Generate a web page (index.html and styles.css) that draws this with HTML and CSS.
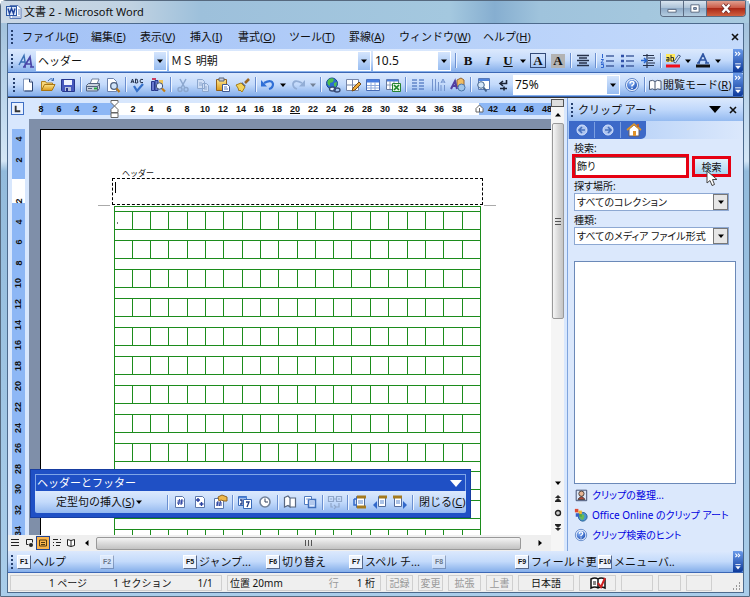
FILE: index.html
```html
<!DOCTYPE html>
<html lang="ja">
<head>
<meta charset="utf-8">
<title>文書 2 - Microsoft Word</title>
<link rel="stylesheet" href="styles.css">
</head>
<body>
<svg class="defs" aria-hidden="true">
  <defs>
    <linearGradient id="gold" x1="0" y1="0" x2="0" y2="1"><stop offset="0" stop-color="#fde58c"/><stop offset="1" stop-color="#d99a1c"/></linearGradient>
    <radialGradient id="orb" cx=".35" cy=".3" r=".8"><stop offset="0" stop-color="#8fb8f8"/><stop offset="1" stop-color="#1d4fb4"/></radialGradient>
  </defs>
  <symbol id="word" viewBox="0 0 16 16"><path d="M4 1.500h8l3 3v10H4z" fill="#fff" stroke="#5a79b5"/><path d="M12 6h2M12 8h2M12 10h2M6 13h8" stroke="#6b8cc8"/><rect x=".5" y="2.500" width="10" height="9" fill="#dbe7fb" stroke="#2d57a5"/><path d="M2 4.500l1.500 5 2-5 2 5 1.500-5" fill="none" stroke="#1f429a" stroke-width="1.500"/></symbol>
  <symbol id="styles" viewBox="0 0 16 16"><path d="M1 12L6 2.500 7.500 12M3 9h4" fill="none" stroke="#3a6fb4" stroke-width="1.500"/><path d="M6 14L12 4l1.500 10M8 11h5M5 14h3M12 14h4" fill="none" stroke="#4a46a8" stroke-width="1.700"/></symbol>
  <symbol id="new" viewBox="0 0 16 16"><path d="M3.500 2h6l3 3v9h-9z" fill="#fff" stroke="#7d93bb"/><path d="M9.500 2v3h3M12.500 5v9h-8" fill="none" stroke="#2b4574"/></symbol>
  <symbol id="open" viewBox="0 0 16 16"><path d="M1.500 13.500v-9h4l1 1.500h6v2" fill="#f6d77c" stroke="#b18322"/><path d="M1.500 13.500l3-6h10.500l-3 6z" fill="url(#gold)" stroke="#a87514"/><path d="M8 4q3-4 5.500-1m0-2v2.500h-2" fill="none" stroke="#3668b5"/></symbol>
  <symbol id="save" viewBox="0 0 16 16"><path d="M1.500 2.500h13v12h-12l-1-1z" fill="#4659bd" stroke="#27378c"/><path d="M4 3h8v5H4z" fill="#eef3ff"/><path d="M5 10h6v4H5z" fill="#b7c2dd"/><path d="M6 11h2v3H6z" fill="#27378c"/></symbol>
  <symbol id="print" viewBox="0 0 16 16"><path d="M5 7l2-5h7l-2 5z" fill="#fff" stroke="#71819c"/><path d="M1.500 8.500l2-2h11v5l-2 2.500h-11z" fill="#c9d1dd" stroke="#53637e"/><path d="M1.500 9.500h11v4M12.500 9.500l2-2.500" fill="none" stroke="#53637e"/><path d="M9 11.500h3" stroke="#1fae3a" stroke-width="1.800"/><path d="M3 11.500h4" stroke="#53637e"/></symbol>
  <symbol id="preview" viewBox="0 0 16 16"><path d="M2.500 1.500h6l3 3v10h-9z" fill="#fff" stroke="#6d83ad"/><circle cx="9" cy="9" r="3.300" fill="#cfe3f8" stroke="#50627f" stroke-width="1.300"/><path d="M11.500 11.500l3 3.500" stroke="#b87a1b" stroke-width="2.200"/></symbol>
  <symbol id="spell" viewBox="0 0 16 16"><path d="M1 6l1.500-4L4 6M1.800 4.800h1.800M5.500 2v4h1.800q1.500-1 0-2 1-2-1.800-2M13 2.500q-3-1-3 1.500t3 1.500" fill="none" stroke="#24324c"/><path d="M4 9l3 5 6-7" fill="none" stroke="#346fc8" stroke-width="2.200"/></symbol>
  <symbol id="research" viewBox="0 0 16 16"><path d="M1.500 4.500h3v9h-3zM5 3.500h3v10H5z" fill="#6878cc" stroke="#293a8d"/><path d="M2 2h4" stroke="#c83d61" stroke-width="2"/><path d="M9 3h4v6H9z" fill="#ecc45b"/><circle cx="9.500" cy="9" r="3.200" fill="#e4f0ff" stroke="#425274"/><path d="M12 11.500l3 3" stroke="#c47e14" stroke-width="2.200"/></symbol>
  <symbol id="cut" viewBox="0 0 16 16"><path d="M5 2l5 9M11 2l-5 9" stroke="#8ca7ce" stroke-width="1.500"/><circle cx="5" cy="12.500" r="2" fill="none" stroke="#8ca7ce" stroke-width="1.500"/><circle cx="11" cy="12.500" r="2" fill="none" stroke="#8ca7ce" stroke-width="1.500"/></symbol>
  <symbol id="copy" viewBox="0 0 16 16"><path d="M2.500 2.500h5l2 2v7h-7zM7.500 6.500h4l2 2v6h-6z" fill="#cfdef5" stroke="#8ca7ce"/><path d="M4 6h3M4 8h3M9 10h3M9 12h3" stroke="#8ca7ce"/></symbol>
  <symbol id="paste" viewBox="0 0 16 16"><path d="M1.500 2.500h10v11h-10z" fill="url(#gold)" stroke="#94621b"/><path d="M4 1h5v3H4z" fill="#c7ccd6" stroke="#5b657a"/><path d="M7.500 7.500h5l2 2v5h-7z" fill="#fff" stroke="#3f5890"/><path d="M9 10h3M9 12h4" stroke="#5c7cc0"/></symbol>
  <symbol id="brush" viewBox="0 0 16 16"><path d="M10 6l4-4" stroke="#9a6622" stroke-width="2.500"/><path d="M7 5l4 4-2 1-3-3z" fill="#5f6d8a"/><path d="M1 8l5-2 4 4-3 5-2-2-1 1-1-3z" fill="#f2d35b" stroke="#a67d1c"/></symbol>
  <symbol id="undo" viewBox="0 0 16 16"><path d="M4 6q8-4 9 1 0 4-4 5" fill="none" stroke="#2f6fd6" stroke-width="2.200"/><path d="M1 3v6.500h6z" fill="#2f6fd6"/></symbol>
  <symbol id="redo" viewBox="0 0 16 16"><path d="M12 6q-8-4-9 1 0 4 4 5" fill="none" stroke="#93aed6" stroke-width="1.800"/><path d="M15 3v6.500H9z" fill="#93aed6"/></symbol>
  <symbol id="link" viewBox="0 0 16 16"><circle cx="7" cy="6.500" r="5.500" fill="#2d6ccf" stroke="#17498e"/><path d="M3 3q3-3 6-1l-1 3-3 1v3q-4-2-2-6M9 6l3-1-1 5-2-1z" fill="#4ebf4b"/><ellipse cx="7.500" cy="12" rx="3" ry="2" fill="#edf3ff" stroke="#394b75" stroke-width="1.300"/><ellipse cx="12" cy="13" rx="3" ry="2" fill="none" stroke="#394b75" stroke-width="1.300"/></symbol>
  <symbol id="tablepen" viewBox="0 0 16 16"><path d="M1.500 2.500h12v11h-12zM1.500 8h12M7.500 2.500v11" fill="#fff" stroke="#7786a8"/><path d="M7 14l1-3 6-6 2 2-6 6z" fill="#edaa39" stroke="#774b18"/></symbol>
  <symbol id="table" viewBox="0 0 16 16"><path d="M1.500 2.500h13v11h-13z" fill="#fff" stroke="#466bb5"/><path d="M2 4h12" stroke="#467be0" stroke-width="3"/><path d="M2 8.500h12M2 11h12M6 5v8M10 5v8" stroke="#8ea9dc"/></symbol>
  <symbol id="excel" viewBox="0 0 16 16"><path d="M1.500 2.500h12v10h-12z" fill="#fff" stroke="#66799d"/><path d="M2 3.500h11" stroke="#4b7ddd" stroke-width="2"/><path d="M2 8h11M5 4v8M9 4v8" stroke="#8b9bb8"/><path d="M7.500 6.500h8v8h-8z" fill="#e4f6e2" stroke="#268231"/><path d="M9 8l5 5M14 8l-5 5" stroke="#1b852b" stroke-width="1.700"/></symbol>
  <symbol id="columns" viewBox="0 0 16 16"><path d="M2 3h5M2 6h5M2 9h5M2 12h5M9 3h5M9 6h5M9 9h5M9 12h5" stroke="#6186c9" stroke-width="1.500"/></symbol>
  <symbol id="textdir" viewBox="0 0 16 16"><path d="M2.500 2v12M5.500 2v12M8.500 5v9M11 6l2-4 2 4M11.500 5h3M11 14V8M14.500 14V8" fill="none" stroke="#7393cd"/></symbol>
  <symbol id="draw" viewBox="0 0 16 16"><path d="M7 3l4-2 3 2v5l-4 3-3-2z" fill="#f1bd61" stroke="#936537"/><circle cx="11.500" cy="10.500" r="3.500" fill="#9fc5ea" stroke="#4974a8"/><path d="M1 12L5 4l2 8M2.500 9H7" fill="none" stroke="#523e9f" stroke-width="2"/></symbol>
  <symbol id="docmap" viewBox="0 0 16 16"><path d="M3.500 1.500h11v11h-11z" fill="#fff" stroke="#587ab7"/><path d="M4 3h10" stroke="#4e82de" stroke-width="2"/><circle cx="6" cy="8" r="3.300" fill="#d5e7fa" stroke="#43638c"/><path d="M8.500 10.500l3 4" stroke="#43638c" stroke-width="2"/></symbol>
  <symbol id="marks" viewBox="0 0 16 16"><path d="M11.500 3v3.500H5M8 4L5 6.500 8 9M5 11.500h7M9 9.500v4" fill="none" stroke="#1c2435" stroke-width="1.600"/></symbol>
  <symbol id="help" viewBox="0 0 16 16"><circle cx="8" cy="8" r="6.500" fill="#eff5ff" stroke="#5c83c6"/><circle cx="8" cy="8" r="5" fill="url(#orb)"/><path d="M6 6.500q0-2 2-2t2 1.800Q10 7.500 8 8.500v1M8 10.800v1.200" fill="none" stroke="#fff" stroke-width="1.400"/></symbol>
  <symbol id="book" viewBox="0 0 16 16"><path d="M2.500 4Q6 2.500 8 4.500 10 2.500 14 4v8.500Q10 11 8 13 6 11 2.500 12.500zM8 4.500V13" fill="#fff" stroke="#47556f"/></symbol>
  <symbol id="center" viewBox="0 0 16 16"><path d="M2 2.500h12M4 5h8M2 7.500h12M4 10h8M2 12.500h12" stroke="#26314a" stroke-width="1.500"/></symbol>
  <symbol id="numlist" viewBox="0 0 16 16"><path d="M6 3h8M6 8h8M6 13h8" stroke="#4662a0" stroke-width="1.500"/><path d="M2.500 1v4M1 6.500h2.500L1 10h3M1 11.500h2.500v3H1" fill="none" stroke="#2f65d0"/></symbol>
  <symbol id="bullist" viewBox="0 0 16 16"><path d="M6 3h8M6 8h8M6 13h8" stroke="#4662a0" stroke-width="1.500"/><path d="M1 3h3M1 8h3M1 13h3" stroke="#2f50a8" stroke-width="2.500"/></symbol>
  <symbol id="indent" viewBox="0 0 16 16"><path d="M3 2.500h11M8 5h7M8 7.500h5M8 10h7M3 12.500h11M7 1v14" stroke="#26314a" stroke-width="1.200"/><path d="M1 7.500h5M4 5l2.500 2.500L4 10" fill="none" stroke="#2767d2" stroke-width="1.500"/></symbol>
  <symbol id="hl" viewBox="0 0 16 16"><path d="M1 1h9v8H1z" fill="#ffe95c"/><path d="M1.500 4.500h2.500V8H1.800V6.200H4M6 2v6h2.500V4.500H6" fill="none" stroke="#333"/><path d="M8.500 9l5-7 2 1-5 7z" fill="#d5e2f7" stroke="#49638d"/><path d="M1 13h14" stroke="#f20d1a" stroke-width="3"/></symbol>
  <symbol id="fontcol" viewBox="0 0 16 16"><path d="M3.500 10L8 1l4 9M5 7h5M2 10h3M10 10h4" fill="none" stroke="#3157a4" stroke-width="1.700"/><path d="M1 13h14" stroke="#111" stroke-width="3"/></symbol>
  <symbol id="home" viewBox="0 0 16 16"><path d="M3 7v7h10V7L8 3z" fill="#fff" stroke="#675d65"/><path d="M1 8l7-6 7 6" fill="none" stroke="#d9942c" stroke-width="1.700"/><path d="M7 9h3v5H7z" fill="#df922b"/><path d="M11 2h2v3h-2z" fill="#b76138"/></symbol>
  <symbol id="back" viewBox="0 0 16 16"><circle cx="8" cy="8" r="5" fill="#adc4ef" stroke="#d6e4ff"/><path d="M11 8H6M8 5L5 8l3 3" fill="none" stroke="#4670bd" stroke-width="1.700"/></symbol>
  <symbol id="fwd" viewBox="0 0 16 16"><circle cx="8" cy="8" r="5" fill="#adc4ef" stroke="#d6e4ff"/><path d="M5 8h5M8 5l3 3-3 3" fill="none" stroke="#4670bd" stroke-width="1.700"/></symbol>
  <symbol id="pgnum" viewBox="0 0 16 16"><path d="M3.500 2.500h7l2 2v9h-9z" fill="#fff" stroke="#5b77aa"/><path d="M7.500 5L6.500 11M10 5L9 11M5.500 7h6M5 9h6" stroke="#2940a0"/></symbol>
  <symbol id="pgs" viewBox="0 0 16 16"><path d="M3.500 2.500h7l2 2v9h-9z" fill="#fff" stroke="#5b77aa"/><path d="M6 4v4M4 6h4M9.500 8v4M7.500 10h4" stroke="#2940a0" stroke-width="1.400"/></symbol>
  <symbol id="pgfmt" viewBox="0 0 16 16"><path d="M2.500 4.500h9v10h-9z" fill="#fff" stroke="#5b77aa"/><path d="M6 7L5 12M8.500 7l-1 5M4 9h6M4 11h6" stroke="#2940a0"/><path d="M6 3l4-2 5 2v4h-3L9 6 7 7z" fill="#edb84c" stroke="#916521"/></symbol>
  <symbol id="date" viewBox="0 0 16 16"><path d="M1.500 2.500h8v9h-8z" fill="#f4f7ff" stroke="#3869b8"/><path d="M2 3.500h8" stroke="#4c82d6" stroke-width="2"/><path d="M6.500 5.500h8v9h-8z" fill="#fff" stroke="#3869b8"/><path d="M3 6h2v4H3M9 8h3l-2 5" fill="none" stroke="#213b84" stroke-width="1.300"/></symbol>
  <symbol id="clock" viewBox="0 0 16 16"><circle cx="8" cy="8" r="5" fill="#fff" stroke="#72829b" stroke-width="1.600"/><path d="M8 4.500V8h3" fill="none" stroke="#32415c"/></symbol>
  <symbol id="setup" viewBox="0 0 16 16"><path d="M2.500 3.500L6 2l2 2v9l-2-1.500-3.500 1.500zM8 4h5.500v9H8" fill="#fff" stroke="#596880" stroke-width="1.200"/></symbol>
  <symbol id="showdoc" viewBox="0 0 16 16"><path d="M2.500 2.500h7v8h-7z" fill="#fff" stroke="#527dc0"/><path d="M6.500 5.500h7v8h-7z" fill="#dbe9ff" stroke="#416fba" stroke-width="1.500"/><path d="M4 5h4M8 8h4M8 10h4" stroke="#8aa8da"/></symbol>
  <symbol id="same" viewBox="0 0 16 16"><path d="M1.500 2.500h5v5h-5zM9.500 2.500h5v5h-5zM7 5h2M4 9v4h2M12 9v4H9M7 11l2 2-2 2M3 5h2M11 5h2" fill="none" stroke="#8fa6c9" stroke-width="1.200"/></symbol>
  <symbol id="switch" viewBox="0 0 16 16"><path d="M4.500 2.500h8v11h-8z" fill="#fff" stroke="#526c9d"/><path d="M5 3h9M5 13h9" stroke="#a57b20" stroke-width="3"/><path d="M6 7h5M6 9h5" stroke="#5987cf"/><path d="M2 5h3M2 5v6h3" fill="none" stroke="#3268ca" stroke-width="1.500"/></symbol>
  <symbol id="prev" viewBox="0 0 16 16"><path d="M6.500 2.500h7v10h-7z" fill="#fff" stroke="#526c9d"/><path d="M7 3h8" stroke="#a57b20" stroke-width="3"/><path d="M8 7h4M8 9h4" stroke="#5987cf"/><path d="M1 11l4-4v8z" fill="#3268ca"/></symbol>
  <symbol id="next" viewBox="0 0 16 16"><path d="M2.500 2.500h7v10h-7z" fill="#fff" stroke="#526c9d"/><path d="M1 3h9" stroke="#a57b20" stroke-width="3"/><path d="M4 7h4M4 9h4" stroke="#5987cf"/><path d="M15 11l-4-4v8z" fill="#3268ca"/></symbol>
  <symbol id="organize" viewBox="0 0 16 16"><path d="M2.500 2.500h12v12h-12z" fill="#dce7f8" stroke="#2f3e62"/><circle cx="8.500" cy="6.500" r="3" fill="#e7b694" stroke="#3b3430"/><path d="M4.500 13q4-6 8 0z" fill="#c14e3c" stroke="#3b3430"/></symbol>
  <symbol id="online" viewBox="0 0 16 16"><circle cx="10" cy="10" r="5" fill="#4595d2" stroke="#275d8f"/><path d="M7 8l4-1 1 3-2 4-3-2z" fill="#67bb57"/><path d="M1 1h4v4H1z" fill="#e04a32"/><path d="M5 3h4v4H5z" fill="#f0b62d"/><path d="M2 6h4v4H2z" fill="#355fc6"/><path d="M6 7h3v3H6z" fill="#52a942"/></symbol>
  <symbol id="tri" viewBox="0 0 8 8"><path d="M1 2.500h6L4 6z"/></symbol>
  <symbol id="triup" viewBox="0 0 8 8"><path d="M1 5.500h6L4 2z"/></symbol>
  <symbol id="trileft" viewBox="0 0 8 8"><path d="M5.500 1v6L2 4z"/></symbol>
  <symbol id="triright" viewBox="0 0 8 8"><path d="M2.500 1v6L6 4z"/></symbol>
  <symbol id="close" viewBox="0 0 8 8"><path d="M1 1l6 6M7 1L1 7" stroke="currentColor" stroke-width="1.600"/></symbol>
  <symbol id="more" viewBox="0 0 10 24"><path d="M2 3l2 2-2 2M5 3l2 2-2 2" fill="none" stroke="#fff" stroke-width="1.200"/><path d="M2 15.500h6" stroke="#fff"/><path d="M2 17.500h6L5 21z" fill="#fff"/></symbol>
</svg>

<div class="window">
  <header class="titlebar">
    <svg class="ic"><use href="#word"/></svg>
    <h1>文書 2 - Microsoft Word</h1>
    <div class="winbtns">
      <button aria-label="最小化"><svg viewBox="0 0 24 15"><path d="M7.500 8.500h9v3h-9z" fill="#fff" stroke="#53647c"/></svg></button>
      <button aria-label="元に戻す"><svg viewBox="0 0 24 15"><path d="M7.500 3.500h9v8h-9z" fill="#fff" stroke="#53647c"/><path d="M10.500 6.500h3v2h-3z" fill="#9fb5cf" stroke="#53647c"/></svg></button>
      <button class="x" aria-label="閉じる"><svg viewBox="0 0 38 15"><path d="M15.500 3.500l7 8M22.500 3.500l-7 8" stroke="#6b2a2a" stroke-width="4"/><path d="M15.500 3.500l7 8M22.500 3.500l-7 8" stroke="#fff" stroke-width="2.400"/></svg></button>
    </div>
  </header>

  <div class="frame">
    <nav class="menubar">
      <span class="grip"></span>
      <div class="menus">
        <button>ファイル(<u>F</u>)</button><button>編集(<u>E</u>)</button><button>表示(<u>V</u>)</button><button>挿入(<u>I</u>)</button><button>書式(<u>O</u>)</button><button>ツール(<u>T</u>)</button><button>罫線(<u>A</u>)</button><button>ウィンドウ(<u>W</u>)</button><button>ヘルプ(<u>H</u>)</button>
      </div>
      <button class="docclose" aria-label="文書を閉じる"><svg class="tiny"><use href="#close"/></svg></button>
    </nav>

    <div class="toolbar">
      <span class="grip"></span>
      <button class="tb" aria-label="スタイル"><svg class="ic"><use href="#styles"/></svg></button>
      <div class="combo c-style"><select aria-label="スタイル名"><option>ヘッダー</option></select><span><svg class="tiny"><use href="#tri"/></svg></span></div>
      <div class="combo c-font"><select aria-label="フォント"><option>ＭＳ 明朝</option></select><span><svg class="tiny"><use href="#tri"/></svg></span></div>
      <div class="combo c-size"><select aria-label="サイズ"><option>10.5</option></select><span><svg class="tiny"><use href="#tri"/></svg></span></div>
      <i class="sep"></i>
      <button class="tb letter"><b>B</b></button><button class="tb letter"><em>I</em></button><button class="tb letter"><u>U</u></button><button class="dd" aria-label="下線の種類"><svg class="tiny"><use href="#tri"/></svg></button>
      <button class="tb letter"><span class="boxed">A</span></button><button class="tb letter"><span class="shaded">A</span></button>
      <i class="sep"></i>
      <button class="tb" aria-label="中央揃え"><svg class="ic"><use href="#center"/></svg></button>
      <i class="sep"></i>
      <button class="tb" aria-label="段落番号"><svg class="ic"><use href="#numlist"/></svg></button><button class="tb" aria-label="箇条書き"><svg class="ic"><use href="#bullist"/></svg></button><button class="tb" aria-label="インデント"><svg class="ic"><use href="#indent"/></svg></button>
      <i class="sep"></i>
      <button class="tb" aria-label="蛍光ペン"><svg class="ic"><use href="#hl"/></svg></button><button class="dd" aria-label="蛍光ペンの色"><svg class="tiny"><use href="#tri"/></svg></button>
      <button class="tb" aria-label="フォントの色"><svg class="ic"><use href="#fontcol"/></svg></button><button class="dd" aria-label="色の選択"><svg class="tiny"><use href="#tri"/></svg></button>
      <button class="more" aria-label="その他のボタン"><svg><use href="#more"/></svg></button>
    </div>

    <div class="toolbar std">
      <span class="grip"></span>
      <button class="tb" aria-label="新規作成"><svg class="ic"><use href="#new"/></svg></button><button class="tb" aria-label="開く"><svg class="ic"><use href="#open"/></svg></button><button class="tb" aria-label="上書き保存"><svg class="ic"><use href="#save"/></svg></button>
      <i class="sep"></i>
      <button class="tb" aria-label="印刷"><svg class="ic"><use href="#print"/></svg></button><button class="tb" aria-label="印刷プレビュー"><svg class="ic"><use href="#preview"/></svg></button>
      <i class="sep"></i>
      <button class="tb" aria-label="スペルチェック"><svg class="ic"><use href="#spell"/></svg></button><button class="tb" aria-label="リサーチ"><svg class="ic"><use href="#research"/></svg></button>
      <i class="sep"></i>
      <button class="tb" aria-label="切り取り"><svg class="ic"><use href="#cut"/></svg></button><button class="tb" aria-label="コピー"><svg class="ic"><use href="#copy"/></svg></button><button class="tb" aria-label="貼り付け"><svg class="ic"><use href="#paste"/></svg></button><button class="tb" aria-label="書式のコピー"><svg class="ic"><use href="#brush"/></svg></button>
      <i class="sep"></i>
      <button class="tb" aria-label="元に戻す"><svg class="ic"><use href="#undo"/></svg></button><button class="dd" aria-label="履歴"><svg class="tiny"><use href="#tri"/></svg></button><button class="tb" aria-label="やり直し"><svg class="ic"><use href="#redo"/></svg></button><button class="dd off" aria-label="やり直しの履歴"><svg class="tiny"><use href="#tri"/></svg></button>
      <i class="sep"></i>
      <button class="tb" aria-label="ハイパーリンク"><svg class="ic"><use href="#link"/></svg></button><button class="tb" aria-label="罫線"><svg class="ic"><use href="#tablepen"/></svg></button><button class="tb" aria-label="表の挿入"><svg class="ic"><use href="#table"/></svg></button><button class="tb" aria-label="ワークシート"><svg class="ic"><use href="#excel"/></svg></button>
      <i class="sep"></i>
      <button class="tb" aria-label="段組み"><svg class="ic"><use href="#columns"/></svg></button><button class="tb" aria-label="縦書き"><svg class="ic"><use href="#textdir"/></svg></button><button class="tb" aria-label="図形描画"><svg class="ic"><use href="#draw"/></svg></button>
      <i class="sep"></i>
      <button class="tb" aria-label="見出しマップ"><svg class="ic"><use href="#docmap"/></svg></button><button class="tb" aria-label="編集記号"><svg class="ic"><use href="#marks"/></svg></button>
      <div class="combo c-zoom"><select aria-label="ズーム"><option>75%</option></select><span><svg class="tiny"><use href="#tri"/></svg></span></div>
      <button class="tb" aria-label="ヘルプ"><svg class="ic"><use href="#help"/></svg></button>
      <i class="sep"></i>
      <button class="read"><svg class="ic"><use href="#book"/></svg>閲覧モード(<u>R</u>)</button>
      <button class="more" aria-label="その他のボタン"><svg><use href="#more"/></svg></button>
    </div>

    <div class="work">
      <main class="doc">
        <div class="hruler">
          <span class="tabsel"><svg viewBox="0 0 12 12"><path d="M4 3v6h5" fill="none" stroke="#333" stroke-width="2"/></svg></span>
          <div class="hscale">
            <span>8</span><span>6</span><span>4</span><span>2</span>
            <span class="mark"><svg viewBox="0 0 9 18"><path d="M1 .5h7v2L4.500 6 1 2.500zM1 12.500V9.500L4.500 6 8 9.500v3zM1 13h7v4.500H1z" fill="#fff" stroke="#666"/></svg></span>
            <span>2</span><span>4</span><span>6</span><span>8</span><span>10</span><span>12</span><span>14</span><span>16</span><span>18</span><span><u>20</u></span><span>22</span><span>24</span><span>26</span><span>28</span><span>30</span><span>32</span><span>34</span><span>36</span><span>38</span>
            <span class="mark end"><svg viewBox="0 0 9 9"><path d="M1 8V4.500L4.500 1 8 4.500V8zM4.500 4v4" fill="#fff" stroke="#666"/></svg></span>
            <span>42</span><span>44</span><span>46</span><span>48</span>
          </div>
        </div>
        <div class="vruler"><span>4</span><span>2</span><span></span><span>2</span><span>4</span><span>6</span><span>8</span><span>10</span><span>12</span><span>14</span><span>16</span><span>18</span><span>20</span><span>22</span><span>24</span><span>26</span><span>28</span><span>30</span><span>32</span><span>34</span></div>
        <div class="canvas">
          <article class="page">
            <p class="hlabel">ヘッダー</p>
            <div class="hbox"><i class="caret"></i></div>
            <svg class="genko" width="398" height="350" viewBox="0 0 398 350">
              <defs>
                <path id="row" d="M16 6.500H382M16 24.500H382M34.500 7V24M52.500 7V24M70.500 7V24M89.500 7V24M107.500 7V24M125.500 7V24M144.500 7V24M162.500 7V24M180.500 7V24M199.500 7V24M217.500 7V24M235.500 7V24M253.500 7V24M272.500 7V24M290.500 7V24M309.500 7V24M327.500 7V24M345.500 7V24M364.500 7V24"/>
              </defs>
              <path d="M0 .5H12M386 .5H398" stroke="#aaa"/>
              <g fill="none" stroke="#1c8c1c">
                <path d="M16.500 1V350M382.500 1V350M16 1.500H382"/>
                <use href="#row"/><use href="#row" y="29"/><use href="#row" y="58"/><use href="#row" y="87"/><use href="#row" y="116"/><use href="#row" y="145"/><use href="#row" y="174"/><use href="#row" y="203"/><use href="#row" y="232"/><use href="#row" y="260"/><use href="#row" y="289"/><use href="#row" y="318"/>
              </g>
              <path d="M19.500 17v2" stroke="#777"/>
            </svg>
          </article>
        </div>
        <div class="vscroll">
          <i class="split"></i>
          <svg class="tiny"><use href="#triup"/></svg>
          <div class="vthumb"><i></i></div>
          <div class="vend">
            <svg class="tiny"><use href="#tri"/></svg>
            <svg class="tiny" viewBox="0 0 8 8"><path d="M1.500 4L4 1.500 6.500 4M1.500 7L4 4.500 6.500 7M1 7.500h6" stroke="#222" fill="#222"/></svg>
            <svg class="tiny" viewBox="0 0 8 8"><circle cx="4" cy="4" r="2.500" fill="#ccc" stroke="#222" stroke-width="1.400"/></svg>
            <svg class="tiny" viewBox="0 0 8 8"><path d="M1.500 1L4 3.500 6.500 1M1.500 4L4 6.500 6.500 4M1 .5h6" stroke="#222" fill="#222"/></svg>
          </div>
        </div>
        <div class="hscroll">
          <button aria-label="下書き"><svg viewBox="0 0 10 10"><path d="M1 1.500h8M1 4.500h8M1 7.500h8" stroke="#222"/></svg></button>
          <button aria-label="Web レイアウト"><svg viewBox="0 0 10 10"><path d="M2.500 1.500h6v3M2.500 1.500v5h2" fill="none" stroke="#222"/><circle cx="7" cy="7" r="2" fill="#222"/></svg></button>
          <button class="on" aria-label="印刷レイアウト"><svg viewBox="0 0 10 10"><path d="M1.500 2h7v6h-7zM3 4.500h4M3 6.500h4" fill="none" stroke="#553a10"/></svg></button>
          <button aria-label="アウトライン"><svg viewBox="0 0 10 10"><path d="M1 1.500h5M4 4.500h5M4 7.500h4M1 4.500h1M1 7.500h1M8 1.500h1" stroke="#222"/></svg></button>
          <button aria-label="閲覧レイアウト"><svg viewBox="0 0 10 10"><path d="M1.500 1.500L5 2.500l3.500-1v6L5 8.500l-3.500-1zM5 2.500v6" fill="#fff" stroke="#222"/></svg></button>
          <span class="arr"><svg class="tiny"><use href="#trileft"/></svg></span>
          <div class="hthumb"><i></i></div>
          <span class="arr r"><svg class="tiny"><use href="#triright"/></svg></span>
        </div>

        <section class="float">
          <header><h2>ヘッダーとフッター</h2><svg viewBox="0 0 12 7"><path d="M0 0h12L6 7z" fill="#fff"/></svg></header>
          <div class="fbar">
            <button class="auto">定型句の挿入(<u>S</u>)<svg class="tiny"><use href="#tri"/></svg></button>
            <i class="sep"></i>
            <button class="tb" aria-label="ページ番号"><svg class="ic"><use href="#pgnum"/></svg></button><button class="tb" aria-label="ページ数"><svg class="ic"><use href="#pgs"/></svg></button><button class="tb" aria-label="番号の書式"><svg class="ic"><use href="#pgfmt"/></svg></button>
            <i class="sep"></i>
            <button class="tb" aria-label="日付"><svg class="ic"><use href="#date"/></svg></button><button class="tb" aria-label="時刻"><svg class="ic"><use href="#clock"/></svg></button>
            <i class="sep"></i>
            <button class="tb" aria-label="ページ設定"><svg class="ic"><use href="#setup"/></svg></button><button class="tb" aria-label="本文の表示"><svg class="ic"><use href="#showdoc"/></svg></button>
            <i class="sep"></i>
            <button class="tb" aria-label="前と同じ"><svg class="ic"><use href="#same"/></svg></button>
            <i class="sep"></i>
            <button class="tb" aria-label="切り替え"><svg class="ic"><use href="#switch"/></svg></button><button class="tb" aria-label="前を表示"><svg class="ic"><use href="#prev"/></svg></button><button class="tb" aria-label="次を表示"><svg class="ic"><use href="#next"/></svg></button>
            <i class="sep"></i>
            <button class="fclose">閉じる(<u>C</u>)</button>
          </div>
        </section>
      </main>

      <aside class="pane">
        <header class="ptitle"><span class="grip"></span><h2>クリップ アート</h2><svg viewBox="0 0 12 7"><path d="M0 0h12L6 7z"/></svg><svg class="tiny"><use href="#close"/></svg></header>
        <div class="pnav"><div><button aria-label="戻る"><svg class="ic"><use href="#back"/></svg></button><button aria-label="進む"><svg class="ic"><use href="#fwd"/></svg></button><button aria-label="ホーム"><svg class="ic"><use href="#home"/></svg></button></div></div>
        <form class="pform">
          <label for="q">検索:</label>
          <div class="search">
            <input id="q" type="text" value="飾り">
            <button type="button">検索<svg class="cursor" viewBox="0 0 12 17"><path d="M1 1v12l3-2.500 2 5 2.500-1-2-5H11z" fill="#fff" stroke="#444"/></svg></button>
          </div>
          <label for="place">探す場所:</label>
          <div class="pick"><select id="place"><option>すべてのコレクション</option></select><span><svg class="tiny"><use href="#tri"/></svg></span></div>
          <label for="kind">種類:</label>
          <div class="pick"><select id="kind"><option>すべてのメディア ファイル形式</option></select><span><svg class="tiny"><use href="#tri"/></svg></span></div>
        </form>
        <div class="results"></div>
        <nav class="links">
          <a href="#"><svg class="ic"><use href="#organize"/></svg>クリップの整理...</a>
          <a href="#"><svg class="ic"><use href="#online"/></svg>Office Online のクリップ アート</a>
          <a href="#"><svg class="ic"><use href="#help"/></svg>クリップ検索のヒント</a>
        </nav>
      </aside>
    </div>

    <div class="fkeys">
      <span class="grip"></span>
      <div class="keys">
        <button><kbd>F1</kbd>ヘルプ</button><button class="off"><kbd>F2</kbd></button><button><kbd>F5</kbd>ジャンプ...</button><button><kbd>F6</kbd>切り替え</button><button><kbd>F7</kbd>スペル チ...</button><button class="off"><kbd>F8</kbd></button><button><kbd>F9</kbd>フィールド更</button><button><kbd>F10</kbd>メニューバ..</button>
      </div>
      <button class="more" aria-label="その他のボタン"><svg><use href="#more"/></svg></button>
    </div>

    <footer class="status">
      <div class="p1"><span>1 ページ</span><span>1 セクション</span><span>1/1</span></div>
      <div class="p2"><span>位置 20mm</span><span class="dim">行</span><span>1 桁</span></div>
      <div class="dim">記録</div><div class="dim">変更</div><div class="dim">拡張</div><div class="dim">上書</div>
      <div>日本語</div>
      <div><svg class="ic" viewBox="0 0 16 16"><path d="M1 4q4-2 7 0 3-2 7 0v9q-4-2-7 0-3-2-7 0zM8 4v9" fill="#fff" stroke="#111" stroke-width="1.500"/><path d="M3 7h3M3 9h3" stroke="#111"/><path d="M8 8l3 4 4-9" fill="none" stroke="#d02020" stroke-width="2"/></svg></div>
      <div></div><div></div><div></div>
      <svg class="resize" viewBox="0 0 10 10"><path d="M8 2h1M8 5h1M8 8h1M5 5h1M5 8h1M2 8h1" stroke="#999" stroke-width="2"/></svg>
    </footer>
  </div>
</div>
</body>
</html>
```
FILE: styles.css
```css
* { box-sizing: border-box; }

body {
  margin: 0;
  font: 11px/16px "Noto Sans", "Noto Sans CJK JP", sans-serif;
  color: #111;
}

.defs { position: absolute; width: 0; height: 0; }
h1, h2, p { margin: 0; font-size: inherit; font-weight: normal; }

button, select, input {
  margin: 0;
  padding: 0;
  border: 0;
  border-radius: 0;
  background: none;
  font: inherit;
  color: inherit;
  appearance: none;
  white-space: nowrap;
}

svg { display: block; flex: none; }
.ic { width: 16px; height: 16px; }
.tiny { width: 8px; height: 8px; }

.window {
  display: flex;
  flex-direction: column;
  height: 100vh;
  padding: 0 5px 3px 6px;
  background: linear-gradient(#bdd0e2 0, #a3c2dd 22px, #c5dcf0 120px, #d4e6f6 160px, #93bbdc 170px, #a9cdea 100%);
  border: 1px solid #56697f;
  border-radius: 6px 6px 0 0;
}

.titlebar {
  display: flex;
  align-items: center;
  gap: 2px;
  height: 22px;
  margin: 0 -5px 0 -6px;
  padding-left: 5px;
  background: linear-gradient(90deg, #cbd8e6, #c0d2e2 130px, #9dc0db 200px, #a4c8df 60%, #86aed0 66%, #9fc3dc 72%, #a9cbe0);
}
.titlebar h1 { flex: 1; }
.winbtns {
  display: flex;
  align-self: flex-start;
  margin-right: 3px;
  border: 1px solid #5b6c83;
  border-top: 0;
  border-radius: 0 0 4px 4px;
  overflow: hidden;
}
.winbtns button { width: 23px; height: 15px; border-right: 1px solid #5b6c83; background: linear-gradient(#d8e4ef, #a8bfd5 50%, #8fabc7 50%, #b4cce0); }
.winbtns svg { width: 22px; height: 15px; }
.winbtns .x { width: 38px; border: 0; background: linear-gradient(#e0a090, #c9533f 50%, #ab2a18 50%, #d0603f); }
.winbtns .x svg { width: 38px; }

.frame {
  display: flex;
  flex: 1;
  flex-direction: column;
  min-height: 0;
  border: 1px solid #4d6a8c;
  background: #c4dafa;
}

.grip {
  flex: none;
  width: 2px;
  height: 14px;
  margin: 0 3px;
  background: repeating-linear-gradient(#26406f 0 2px, transparent 2px 4px);
}

.menubar { display: flex; flex: none; align-items: center; height: 25px; background: linear-gradient(90deg, #a3c2f6, #c4dafb); }
.menus { display: grid; flex: 1; grid-template-columns: 69px 49px 50px 48px 51px 60px 50px 84px auto; margin-left: 6px; justify-content: start; }
.menus button { text-align: left; }
.docclose { padding: 0 4px; }

.toolbar {
  display: flex;
  flex: none;
  align-items: center;
  height: 24px;
  background: linear-gradient(#dce9fd, #c3dafb 50%, #84aeea);
  border-bottom: 1px solid #3b67b5;
}
.std { padding-left: 2px; }
.tb { display: flex; flex: none; align-items: center; justify-content: center; width: 20px; height: 20px; }
.dd { display: flex; flex: none; width: 10px; justify-content: center; }
.off svg { opacity: .4; }
.sep { flex: none; width: 1px; height: 15px; margin: 0 2px; background: #6a8fd0; box-shadow: 1px 0 #edf4ff; }
.combo { display: flex; flex: none; height: 20px; margin-right: 2px; background: #fff; }
.combo select { flex: 1; min-width: 0; padding-left: 2px; }
.combo span { display: flex; align-items: center; justify-content: center; width: 12px; margin: 1px; background: linear-gradient(#d5e5fd, #98bdf1); }
.c-style { width: 131px; }
.c-font { width: 202px; }
.c-size { width: 78px; }
.c-zoom { width: 107px; }
.c-size select, .c-zoom select { font-size: 12px; }
.letter { font: bold 13px/16px "Liberation Serif", serif; }
.boxed { padding: 0 2px; border: 1px solid #334a78; line-height: 13px; }
.shaded { padding: 0 2px; background: #b3b3b3; line-height: 14px; }
.more { flex: none; width: 10px; height: 100%; margin-left: auto; background: linear-gradient(#6b9bea, #0e3a9b); border-radius: 0 2px 2px 0; }
.more svg { width: 10px; height: 100%; }
.read { display: flex; align-items: center; }

.work { display: grid; flex: 1; grid-template-columns: minmax(0, 1fr) 176px; min-height: 0; border-top: 1px solid #333; }

.doc {
  position: relative;
  display: grid;
  grid-template: 21px minmax(0, 1fr) 16px / 21px minmax(0, 1fr) 16px;
  min-height: 0;
  background: #d8e7fd;
  font-size: 9px;
}
.hruler { display: flex; grid-column: 1 / 3; align-items: center; overflow: hidden; }
.tabsel { flex: none; width: 13px; height: 13px; margin: 0 8px 0 3px; background: #eaf2ff; border: 1px solid #3e6fc4; }
.hscale {
  display: flex;
  align-items: center;
  height: 12px;
  font: bold 9px/12px "Liberation Sans", sans-serif;
  background: linear-gradient(90deg, transparent 9px, #8db7f5 9px 82px, #fff 82px 447px, #8db7f5 447px);
}
.hscale span { flex: none; width: 18px; text-align: center; }
.hscale .mark { display: flex; width: 20px; justify-content: center; }
.hscale .mark svg { width: 9px; height: 18px; }
.hscale .end { width: 18px; justify-content: flex-end; }
.hscale .end svg { height: 9px; }

.vruler {
  display: grid;
  grid-row: 2 / 4;
  grid-column: 1;
  grid-template-rows: repeat(20, 1fr);
  justify-items: center;
  margin: 10px 4px 0;
  padding-bottom: 10px;
  font: bold 9px/12px "Liberation Sans", sans-serif;
  background: linear-gradient(#8db7f5 50px, #fff 50px 74px, #8db7f5 74px);
  align-items: center;
  overflow: hidden;
}
.vruler span { transform: rotate(-90deg); }

.canvas { grid-row: 2; grid-column: 2; padding: 10px 0 0 11px; overflow: hidden; background: #7f8fa9; }
.page { padding: 38px 0 0 57px; background: #fff; border: 1px solid #000; border-width: 1px 0 0 1px; }
.hlabel { height: 10px; padding-left: 24px; font-size: 8px; line-height: 10px; }
.hbox { width: 371px; height: 27px; margin: 0 0 0 14px; padding: 3px 2px; border: 1px dashed #000; }
.caret { display: block; width: 1px; height: 11px; background: #000; }

.vscroll {
  display: flex;
  grid-row: 1 / 4;
  grid-column: 3;
  flex-direction: column;
  align-items: center;
  gap: 4px;
  background: linear-gradient(90deg, #f5f5f5 13px, #d8e7fd 13px);
  padding: 1px 3px 0 0;
}
.split { width: 13px; height: 8px; background: #ddd; border: 1px solid #555; }
.vthumb { display: flex; align-items: center; justify-content: center; width: 12px; height: 196px; border: 1px solid #999; border-radius: 2px; background: linear-gradient(90deg, #f6f6f6, #dadada 50%, #c4c4c4); }
.vthumb i { width: 6px; height: 7px; background: repeating-linear-gradient(#555 0 1px, transparent 1px 3px); }
.vend { display: flex; flex-direction: column; gap: 7px; margin-top: auto; padding-bottom: 19px; }
.hscroll { z-index: 1; display: flex; grid-row: 3; grid-column: 1 / 3; align-items: center; background: #efefef; }
.hscroll button { display: flex; flex: none; align-items: center; justify-content: center; width: 14px; height: 14px; }
.hscroll button svg { width: 10px; height: 10px; }
.hscroll .on { border: 1px solid #23438e; background: #fbb44b; }
.arr { display: flex; flex: none; width: 18px; justify-content: center; }
.arr.r { width: 22px; margin-left: 8px; }
.hthumb { display: flex; flex: 1; align-items: center; justify-content: center; height: 13px; border: 1px solid #999; border-radius: 2px; background: linear-gradient(#f4f4f4, #dadada 50%, #c2c2c2); }
.hthumb i { width: 7px; height: 6px; background: repeating-linear-gradient(90deg, #555 0 1px, transparent 1px 3px); }

.float {
  position: absolute;
  z-index: 2;
  bottom: 33px;
  left: 22px;
  width: 441px;
  padding: 4px;
  background: #1f50c5;
  border: 1px solid #173da0;
  font-size: 11px;
}
.float header { display: flex; align-items: center; justify-content: space-between; height: 17px; padding: 0 3px 0 1px; color: #fff; border: 1px solid #7fa6e8; border-bottom: 0; }
.float header svg { width: 12px; height: 7px; }
.fbar { display: flex; align-items: center; height: 22px; padding-left: 21px; background: linear-gradient(#dce9fd, #c3dafb 50%, #93b8ef); border-radius: 0 0 2px 2px; }
.auto { display: flex; align-items: center; width: 109px; }
.fclose { padding-left: 4px; }

.pane { display: flex; flex-direction: column; min-width: 0; border-left: 1px solid #7fa4dc; background: #dbe8fc; }
.ptitle { display: flex; flex: none; align-items: center; height: 23px; padding-right: 6px; background: linear-gradient(#dce9fd, #c0d8fb 50%, #94baf0); }
.ptitle h2 { flex: 1; padding-left: 2px; }
.ptitle svg:not(.tiny) { width: 12px; height: 7px; margin-right: 8px; }
.pnav { flex: none; padding-left: 1px; background: linear-gradient(90deg, #a8c8f5, #dbe8fc); }
.pnav div { display: flex; align-items: center; width: 77px; height: 18px; border-radius: 0 0 5px; background: #3c69c8; }
.pnav button { display: flex; flex: 1; justify-content: center; border-left: 1px solid #7c9fe0; }
.pnav button:first-child { border: 0; }
.pform { padding: 3px 14px 0 6px; font-size: 10px; font-feature-settings: "palt"; }
.pform label { display: block; height: 13px; line-height: 13px; }
.search { display: flex; gap: 3px; height: 24px; margin: -1px -2px 2px; }
.search input { flex: 1; min-width: 0; padding: 0 2px; border: 3px solid #e60012; box-shadow: inset 1px 1px #777; background: #fff; }
.search button { position: relative; width: 39px; height: 21px; margin-top: 2px; border: 3px solid #e60012; background: linear-gradient(#e3f1fb, #a9d5f0); line-height: 14px; }
.cursor { position: absolute; top: 11px; left: 11px; width: 12px; height: 17px; }
.pick { display: flex; height: 18px; margin-bottom: 3px; border: 1px solid #8da8d2; background: #fff; }
.pick select { flex: 1; min-width: 0; padding-left: 2px; font-feature-settings: inherit; }
.pick span { display: flex; align-items: center; justify-content: center; width: 15px; background: #e6e6e6; border: 1px solid #777; }
.results { flex: 1; margin: 13px 7px 0 6px; border: 1px solid #6b89b8; background: #fff; }
.links { display: flex; flex: none; flex-direction: column; gap: 4px; padding: 3px 0 8px 6px; font-size: 10px; font-feature-settings: "palt"; }
.links a { display: flex; align-items: center; gap: 4px; color: #0000e0; text-decoration: none; white-space: nowrap; }
.links .ic { width: 14px; height: 16px; }

.fkeys { display: flex; flex: none; align-items: center; height: 22px; background: linear-gradient(#dce9fd, #c3dafb 50%, #84aeea); border-bottom: 1px solid #3b67b5; }
.keys { display: grid; flex: 1; grid-template-columns: repeat(8, 83px); min-width: 0; padding-left: 1px; }
.fkeys button { display: flex; align-items: center; min-width: 0; }
.keys .off { opacity: .5; }
kbd { flex: none; width: 14px; height: 14px; margin-right: 2px; border: 1px solid #8b9ab5; border-color: #fff #56688b #56688b #fff; background: #edf3fd; font: bold 7px/12px "Liberation Sans", sans-serif; text-align: center; }

.status {
  display: grid;
  flex: none;
  grid-template-columns: 212px 154px 27px 25px 33px 27px 56px 37px 32px 23px 26px 1fr;
  gap: 5px;
  height: 19px;
  padding: 2px 2px 1px 2px;
  background: #efefef;
  font-size: 10px;
  line-height: 14px;
}
.status div { display: flex; align-items: center; justify-content: center; border: 1px solid #cfcfcf; overflow: hidden; white-space: nowrap; }
.status .p1 { justify-content: flex-start; gap: 26px; padding-left: 38px; }
.status .p2 { justify-content: flex-end; gap: 18px; padding: 0 5px 0 2px; }
.status .p2 span:first-child { margin-right: auto; }
.status .dim { color: #999; }
.resize { width: 10px; height: 10px; place-self: end; }
```
